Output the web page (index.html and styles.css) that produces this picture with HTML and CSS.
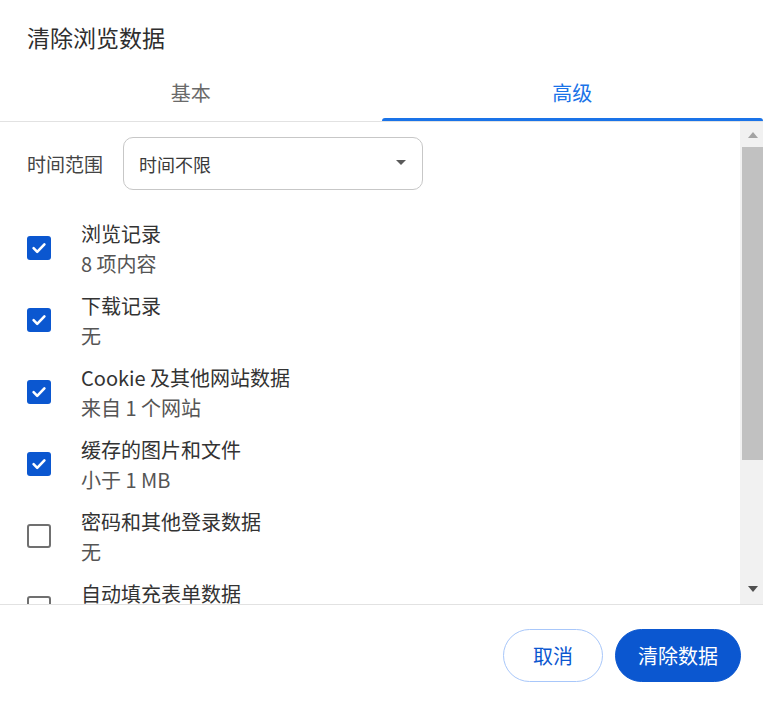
FILE: index.html
```html
<!DOCTYPE html>
<html lang="zh-CN">
<head>
<meta charset="utf-8">
<title>清除浏览数据</title>
<link rel="stylesheet" href="styles.css">
</head>
<body>
<div class="dialog">
  <header class="dlg-header">
    <h1 class="dlg-title">清除浏览数据</h1>
  </header>
  <nav class="tabs">
    <div class="tab">基本</div>
    <div class="tab tab-active">高级</div>
  </nav>
  <div class="dlg-body">
    <div class="content">
      <div class="range-row">
        <span class="range-label">时间范围</span>
        <div class="select">
          <span class="select-value">时间不限</span>
          <span class="select-arrow"></span>
        </div>
      </div>
      <ul class="items">
        <li class="item">
          <span class="cb cb-on"><svg viewBox="0 0 24 24" width="24" height="24"><path d="M6.6 12.2 L10.2 15.8 L17.4 8.4" fill="none" stroke="#fff" stroke-width="2.6" stroke-linecap="round" stroke-linejoin="round"/></svg></span>
          <div class="item-text"><div class="item-title">浏览记录</div><div class="item-sub">8 项内容</div></div>
        </li>
        <li class="item">
          <span class="cb cb-on"><svg viewBox="0 0 24 24" width="24" height="24"><path d="M6.6 12.2 L10.2 15.8 L17.4 8.4" fill="none" stroke="#fff" stroke-width="2.6" stroke-linecap="round" stroke-linejoin="round"/></svg></span>
          <div class="item-text"><div class="item-title">下载记录</div><div class="item-sub">无</div></div>
        </li>
        <li class="item">
          <span class="cb cb-on"><svg viewBox="0 0 24 24" width="24" height="24"><path d="M6.6 12.2 L10.2 15.8 L17.4 8.4" fill="none" stroke="#fff" stroke-width="2.6" stroke-linecap="round" stroke-linejoin="round"/></svg></span>
          <div class="item-text"><div class="item-title">Cookie 及其他网站数据</div><div class="item-sub">来自 1 个网站</div></div>
        </li>
        <li class="item">
          <span class="cb cb-on"><svg viewBox="0 0 24 24" width="24" height="24"><path d="M6.6 12.2 L10.2 15.8 L17.4 8.4" fill="none" stroke="#fff" stroke-width="2.6" stroke-linecap="round" stroke-linejoin="round"/></svg></span>
          <div class="item-text"><div class="item-title">缓存的图片和文件</div><div class="item-sub">小于 1 MB</div></div>
        </li>
        <li class="item">
          <span class="cb cb-off"></span>
          <div class="item-text"><div class="item-title">密码和其他登录数据</div><div class="item-sub">无</div></div>
        </li>
        <li class="item">
          <span class="cb cb-off"></span>
          <div class="item-text"><div class="item-title">自动填充表单数据</div><div class="item-sub"></div></div>
        </li>
      </ul>
    </div>
    <div class="scrollbar">
      <div class="sb-btn"><span class="tri-up"></span></div>
      <div class="sb-thumb"></div>
      <div class="sb-track"></div>
      <div class="sb-btn"><span class="tri-down"></span></div>
    </div>
  </div>
  <footer class="dlg-footer">
    <button class="btn btn-outline">取消</button>
    <button class="btn btn-primary">清除数据</button>
  </footer>
</div>
</body>
</html>
```
FILE: styles.css
```css
* { box-sizing: border-box; }
html, body { margin: 0; padding: 0; background: #fff; }
body {
  font-family: "Noto Sans CJK SC", "Noto Sans", sans-serif;
  color: #1f1f1f;
}
.dialog {
  width: 763px;
  height: 705px;
  display: flex;
  flex-direction: column;
  overflow: hidden;
}
.dlg-header {
  height: 64px;
  padding: 22px 0 0 27px;
}
.dlg-title {
  margin: 0;
  font-size: 23px;
  line-height: 30px;
  font-weight: 400;
  color: #2e2e2e;
}
.tabs {
  display: flex;
  height: 58px;
  border-bottom: 1px solid #e2e2e2;
}
.tab {
  flex: 1;
  position: relative;
  display: flex;
  align-items: center;
  justify-content: center;
  font-size: 20px;
  color: #6a6a6a;
  padding-bottom: 1px;
}
.tab-active { color: #1a73e8; }
.tab-active::after {
  content: "";
  position: absolute;
  left: 0;
  right: 0;
  bottom: 0;
  height: 3px;
  background: #1a73e8;
  border-radius: 3px 3px 0 0;
}
.dlg-body {
  height: 483px;
  display: flex;
  border-bottom: 1px solid #e2e2e2;
}
.content {
  flex: 1;
  overflow: hidden;
  padding: 15px 0 0 27px;
}
.range-row {
  display: flex;
  align-items: center;
  gap: 20px;
}
.range-label {
  font-size: 19px;
  color: #444;
  width: 76px;
}
.select {
  width: 300px;
  height: 53px;
  border: 1px solid #c7c7c7;
  border-radius: 10px;
  display: flex;
  align-items: center;
  justify-content: space-between;
  padding: 0 16px 0 15px;
}
.select-value {
  font-size: 18px;
  color: #3a3a3a;
}
.select-arrow {
  width: 0;
  height: 0;
  border-left: 5px solid transparent;
  border-right: 5px solid transparent;
  border-top: 5px solid #5a5a5a;
  margin-top: -2px;
}
.items {
  list-style: none;
  margin: 28px 0 0;
  padding: 0;
}
.item {
  display: flex;
  align-items: center;
  gap: 30px;
  height: 60px;
  margin-bottom: 12px;
}
.cb {
  flex: none;
  width: 24px;
  height: 24px;
  border-radius: 3px;
  display: block;
}
.cb svg { display: block; }
.cb-on { background: #0b57d0; }
.cb-off { border: 2.5px solid #707070; }
.item-text {
  display: flex;
  flex-direction: column;
  padding-top: 2px;
}
.item-title {
  font-size: 20px;
  line-height: 30px;
  color: #333;
}
.item-sub {
  font-size: 20px;
  line-height: 30px;
  height: 30px;
  color: #555;
}
.scrollbar {
  width: 23px;
  background: #f1f1f1;
  display: flex;
  flex-direction: column;
}
.sb-btn {
  height: 25px;
  display: flex;
  align-items: center;
  justify-content: center;
  padding-left: 2px;
}
.tri-up {
  width: 0; height: 0;
  border-left: 5.5px solid transparent;
  border-right: 5.5px solid transparent;
  border-bottom: 6px solid #a3a3a3;
}
.tri-down {
  width: 0; height: 0;
  border-left: 5.5px solid transparent;
  border-right: 5.5px solid transparent;
  border-top: 6px solid #505050;
  margin-top: -6px;
}
.sb-thumb {
  height: 313px;
  margin-left: 2px;
  background: #c1c1c1;
}
.sb-track { flex: 1; }
.dlg-footer {
  flex: 1;
  display: flex;
  justify-content: flex-end;
  align-items: flex-start;
  gap: 12px;
  padding: 24px 22px 0 0;
}
.btn {
  height: 53px;
  border-radius: 27px;
  font-family: inherit;
  font-size: 20px;
  font-weight: 400;
  cursor: pointer;
}
.btn-outline {
  width: 100px;
  background: #fff;
  border: 1px solid #a8c7fa;
  color: #0b57d0;
}
.btn-primary {
  width: 126px;
  background: #0b57d0;
  border: 1px solid #0b57d0;
  color: #fff;
}
```
